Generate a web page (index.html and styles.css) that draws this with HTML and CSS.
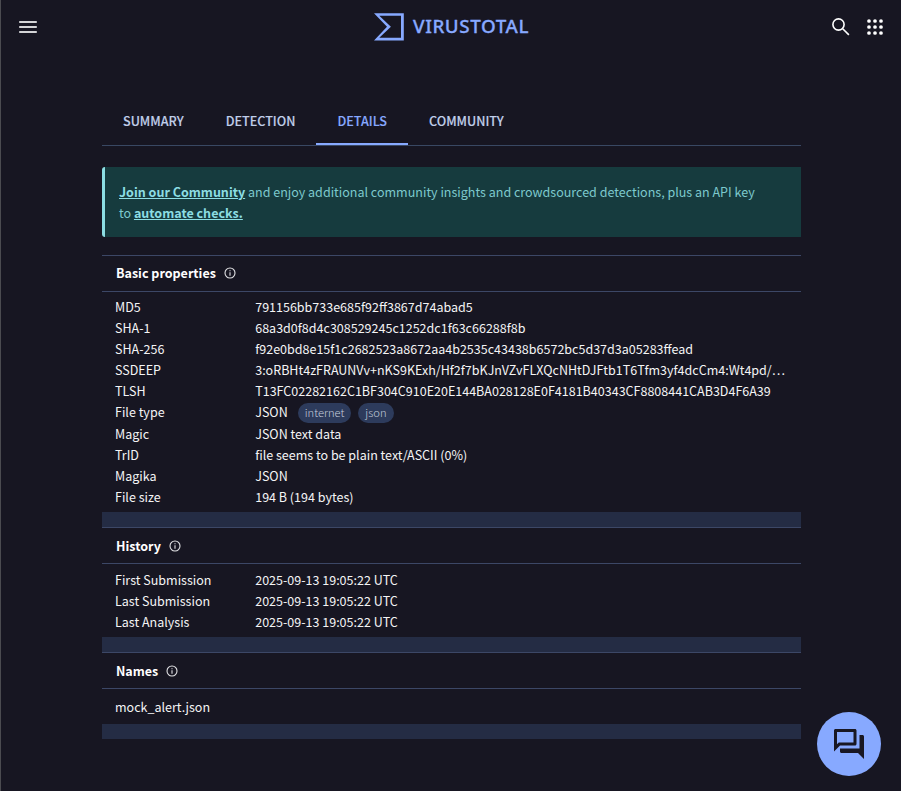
FILE: index.html
```html
<!DOCTYPE html>
<html lang="en">
<head>
<meta charset="utf-8">
<title>VirusTotal - File details</title>
<link rel="stylesheet" href="styles.css">
</head>
<body>
<header class="topbar">
  <svg class="menu" width="24" height="24" viewBox="0 0 24 24"><path d="M3.2 7h17.6M3.2 12h17.6M3.2 17h17.6"/></svg>
  <div class="brand">
    <svg class="mark" width="30" height="28" viewBox="0 0 30 28"><path fill-rule="evenodd" d="M0 .2h29.8v27.2H0l13-13.6zM5.3 2.8l11.6 11-11.6 11h21.7v-22z"/></svg>
    <svg class="wordmark" width="120" height="28"><text x="1" y="20.2" textLength="115.5" lengthAdjust="spacing">VIRUSTOTAL</text></svg>
  </div>
  <div class="tools">
    <svg class="search" width="24" height="24" viewBox="0 0 24 24"><circle cx="9.5" cy="9.5" r="5.6"/><path d="M13.7 13.7l6.2 6.2"/></svg>
    <svg class="apps" width="24" height="24" viewBox="0 0 24 24"><circle cx="6" cy="6" r="1.85"/><circle cx="12" cy="6" r="1.85"/><circle cx="18" cy="6" r="1.85"/><circle cx="6" cy="12" r="1.85"/><circle cx="12" cy="12" r="1.85"/><circle cx="18" cy="12" r="1.85"/><circle cx="6" cy="18" r="1.85"/><circle cx="12" cy="18" r="1.85"/><circle cx="18" cy="18" r="1.85"/></svg>
  </div>
</header>
<main>
  <nav class="tabs">
    <a class="tab">SUMMARY</a><a class="tab">DETECTION</a><a class="tab active">DETAILS</a><a class="tab">COMMUNITY</a>
  </nav>
  <div class="notice"><a>Join our Community</a> and enjoy additional community insights and crowdsourced detections, plus an API key<br>to <a>automate checks.</a></div>

  <section class="panel basic">
    <h2>Basic properties <svg class="info" width="12" height="12" viewBox="0 0 12 12"><circle cx="6" cy="6" r="5"/><path d="M6 5.3v3.4M6 3.2v1.1"/></svg></h2>
    <dl>
      <dt>MD5</dt><dd>791156bb733e685f92ff3867d74abad5</dd>
      <dt>SHA-1</dt><dd>68a3d0f8d4c308529245c1252dc1f63c66288f8b</dd>
      <dt>SHA-256</dt><dd>f92e0bd8e15f1c2682523a8672aa4b2535c43438b6572bc5d37d3a05283ffead</dd>
      <dt>SSDEEP</dt><dd>3:oRBHt4zFRAUNVv+nKS9KExh/Hf2f7bKJnVZvFLXQcNHtDJFtb1T6Tfm3yf4dcCm4:Wt4pd/…</dd>
      <dt>TLSH</dt><dd>T13FC02282162C1BF304C910E20E144BA028128E0F4181B40343CF8808441CAB3D4F6A39</dd>
      <dt class="tall">File type</dt><dd class="tall">JSON <span class="chip">internet</span><span class="chip">json</span></dd>
      <dt>Magic</dt><dd>JSON text data</dd>
      <dt>TrID</dt><dd>file seems to be plain text/ASCII (0%)</dd>
      <dt>Magika</dt><dd>JSON</dd>
      <dt>File size</dt><dd>194 B (194 bytes)</dd>
    </dl>
  </section>
  <section class="panel history">
    <h2>History <svg class="info" width="12" height="12" viewBox="0 0 12 12"><circle cx="6" cy="6" r="5"/><path d="M6 5.3v3.4M6 3.2v1.1"/></svg></h2>
    <dl>
      <dt>First Submission</dt><dd>2025-09-13 19:05:22 UTC</dd>
      <dt>Last Submission</dt><dd>2025-09-13 19:05:22 UTC</dd>
      <dt>Last Analysis</dt><dd>2025-09-13 19:05:22 UTC</dd>
    </dl>
  </section>
  <section class="panel">
    <h2>Names <svg class="info" width="12" height="12" viewBox="0 0 12 12"><circle cx="6" cy="6" r="5"/><path d="M6 5.3v3.4M6 3.2v1.1"/></svg></h2>
    <p class="name">mock_alert.json</p>
  </section>
</main>
<button class="chat" aria-label="Chat"><svg width="36" height="36" viewBox="0 0 24 24"><path d="M15 4v7H5.17L4 12.17V4h11m1-2H3c-.55 0-1 .45-1 1v14l4-4h10c.55 0 1-.45 1-1V3c0-.55-.45-1-1-1zm5 4h-2v9H6v2c0 .55.45 1 1 1h11l4 4V7c0-.55-.45-1-1-1z"/></svg></button>
</body>
</html>
```
FILE: styles.css
```css
* { box-sizing: border-box; }
body {
  margin: 0;
  height: 791px;
  overflow: hidden;
  border-left: 1px solid #4b4b50;
  background: #171622;
  color: #f4f4f5;
  font: 12.53px/21px "Noto Sans CJK SC", "Noto Sans", sans-serif;
}
svg { display: block; flex: none; }
.topbar {
  display: grid;
  grid-template-columns: 1fr auto 1fr;
  align-items: center;
  height: 54px;
  padding: 0 14px 0 15px;
}
.menu { fill: none; stroke: #d4d4d7; stroke-width: 2; }
.brand { display: flex; align-items: center; gap: 8px; padding-left: 3px; }
.mark { fill: #87a9ff; }
.wordmark text {
  fill: #87a9ff;
  stroke: #87a9ff;
  stroke-width: .3px;
  font-family: "Noto Sans", "Open Sans", sans-serif;
  font-size: 18.8px;
  font-weight: 500;
}
.tools { display: flex; justify-content: flex-end; gap: 10px; }
.search { fill: none; stroke: #fff; stroke-width: 1.6; }
.apps { fill: #fff; }
main { width: 699px; margin: 43px 0 0 101px; }
.tabs { display: flex; height: 49px; border-bottom: 1px solid #394863; }
.tab {
  height: 48px;
  padding: 0 21px;
  line-height: 47px;
  font-size: 12.58px;
  font-weight: 500;
  color: #c0cee9;
  -webkit-text-stroke: .12px currentColor;
}
.tab.active { color: #87a9ff; border-bottom: 2px solid #87a9ff; }
.notice {
  height: 70px;
  margin: 21px 0 18px;
  padding: 14px;
  border-left: 3px solid #8cdde3;
  border-radius: 3px 0 0 3px;
  background: #163b3e;
  color: #7dc9cd;
}
.notice a { color: #8cdde3; font-weight: 700; text-decoration: underline; }
.panel { border-bottom: 15px solid #242c44; }
h2 {
  display: flex;
  align-items: center;
  gap: 8px;
  height: 37px;
  margin: 0;
  padding-left: 14px;
  border: solid #3c4766;
  border-width: 1px 0;
  color: #fff;
  font-size: 12.53px;
}
.basic h2 { padding-bottom: 2px; }
.info { fill: none; stroke: #e2e2e5; stroke-width: 1.1; }
dl {
  display: grid;
  grid-template-columns: 140px 1fr;
  margin: 0;
  padding: 4px 13px 5px;
}
.history dl { padding-top: 5px; }
dd { margin: 0; padding-left: .2px; white-space: nowrap; }
.tall { height: 22px; }
dd.tall { display: flex; align-items: flex-start; }
.chip {
  height: 20px;
  margin: 2px 0 0 7px;
  padding: 0 7px;
  border-radius: 10px;
  background: #2d3b5c;
  color: #c3cbdb;
  font-size: 11.17px;
  font-weight: 300;
  line-height: 19px;
}
.chip:first-child { margin-left: 10px; }
.name { margin: 0; padding: 0 13px; height: 35px; line-height: 35px; }
.chat {
  position: absolute;
  left: 817px;
  top: 712px;
  display: grid;
  place-items: center;
  width: 64px;
  height: 64px;
  padding: 0;
  border: 0;
  border-radius: 50%;
  background: #87a9ff;
}
.chat svg { fill: #181723; }
```
